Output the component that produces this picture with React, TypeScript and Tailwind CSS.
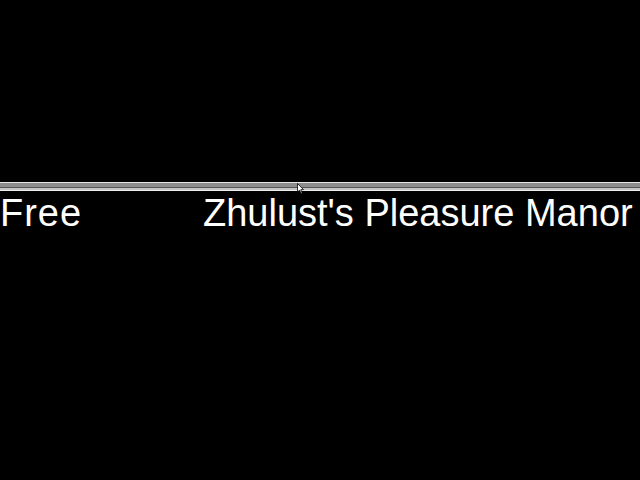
import React from "react";

export default function App() {
  return (
    <div className="relative w-[640px] h-[480px] bg-black overflow-hidden" style={{ fontFamily: '"Liberation Sans", Arial, sans-serif' }}>
      <div className="h-[182px]" />
      <div className="flex flex-col">
        <div className="h-[1px] bg-[#e6e6e6]" />
        <div className="h-[4px] bg-[#8c8c8c]" />
        <div className="h-[1px] bg-[#555555]" />
        <div className="h-[2px] bg-[#c4c4c4]" />
        <div className="h-[1px] bg-[#f0f0f0]" />
      </div>
      <div className="flex text-white text-[38px] leading-[38px] mt-[3px]">
        <div className="w-[203px] tracking-[1px]">Free</div>
        <div className="whitespace-nowrap">Zhulust's Pleasure Manor</div>
      </div>
      <svg className="absolute left-[297px] top-[183px]" width="7" height="11" viewBox="0 0 7 11">
        <path d="M0.5 0.5 L0.5 9 L2.5 7 L4 10.5 L5.2 10 L3.8 6.6 L6.5 6.6 Z" fill="#ffffff" stroke="#000000" strokeWidth="0.8" />
      </svg>
    </div>
  );
}
